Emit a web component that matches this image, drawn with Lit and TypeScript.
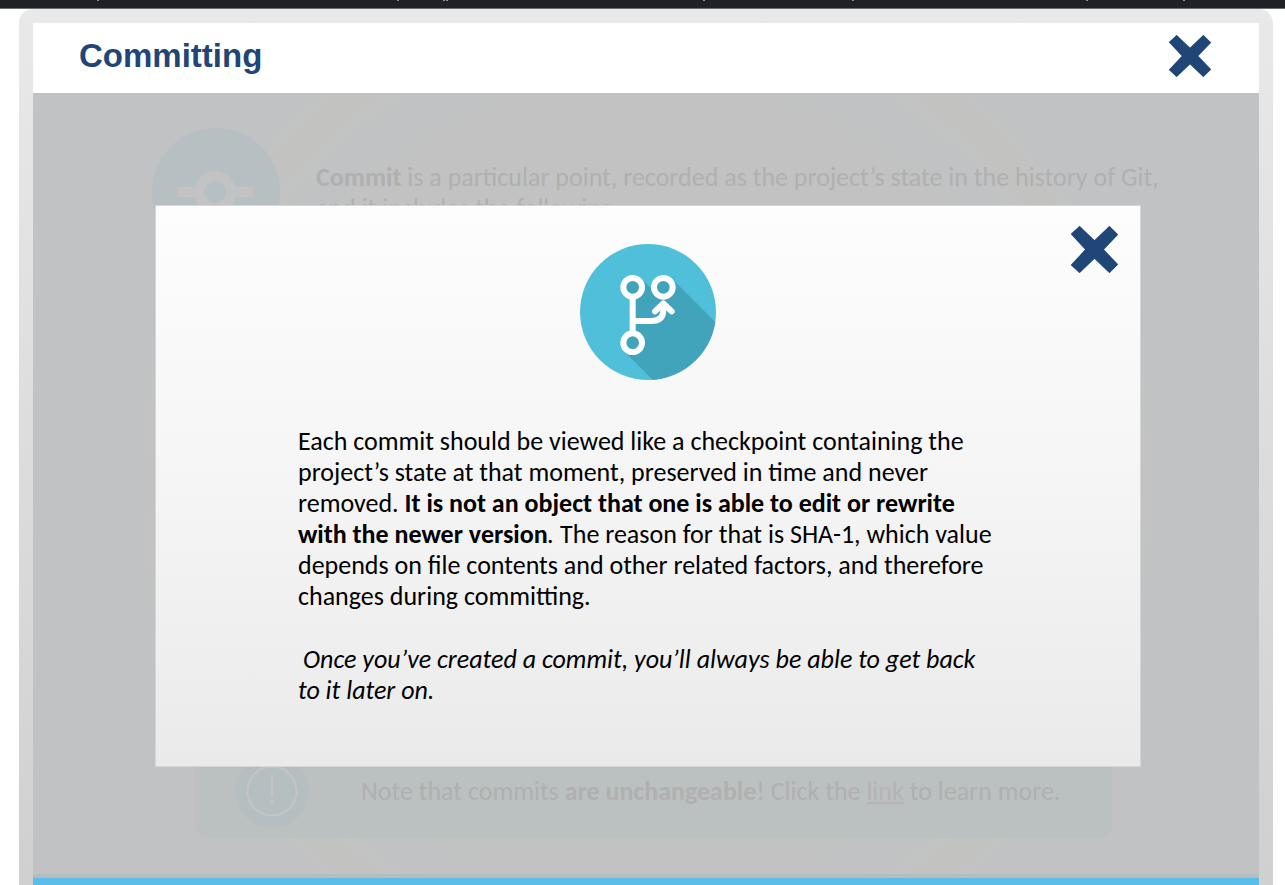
import { LitElement, html, css, svg } from "lit";
import { customElement, state } from "lit/decorators.js";

const cross = html`<svg class="cross" viewBox="0 0 41 41" aria-hidden="true">
  <path
    d="M0.5 7 7.5 0.5 20.5 13 33.5 0.5 40.5 7.5 28 20.5 40.5 33.5 33.5 40.5 20.5 28 7.5 40.5 0.5 34 13 20.5Z"
    fill="#1f4677" stroke="#1f4677" stroke-width="1" stroke-linejoin="round"
  />
</svg>`;

const tabMarks = [97, 397, 443, 446, 703, 852, 1086, 1183];

@customElement("app-root")
export class AppRoot extends LitElement {
  @state() private noteOpen = true;

  static styles = css`
    :host {
      display: flex;
      flex-direction: column;
      height: 100vh;
      overflow: hidden;
      background: #fff;
      font-family: Carlito, Lato, sans-serif;
      font-size: 26px;
      line-height: 31px;
      color: #000;
    }
    * { box-sizing: border-box; }
    p, h1 { margin: 0; }
    .topbar {
      flex: none;
      height: 9px;
      background: #202124;
      border-bottom: 1px solid #6a6d71;
    }
    .topbar svg { display: block; width: 100%; height: 1px; }
    .frame {
      flex: 1;
      min-height: 0;
      display: flex;
      flex-direction: column;
      margin: 0 12px 0 19px;
      padding: 14px 14px 0;
      border-radius: 14px 14px 0 0;
      background: linear-gradient(#e9e9e9, #e4e4e4 20%, #d0d0d0);
    }
    .header {
      flex: none;
      height: 70px;
      display: flex;
      align-items: center;
      justify-content: space-between;
      padding: 0 48px 4px 46px;
      background: #fff;
    }
    .title {
      font: bold 33px/40px "Liberation Sans", Arial, sans-serif;
      color: #1f4677;
    }
    .close {
      display: block;
      width: 42px;
      height: 42px;
      padding: 0;
      border: 0;
      background: none;
      cursor: pointer;
    }
    .cross { display: block; width: 100%; height: 100%; }
    .stage {
      flex: 1;
      min-height: 0;
      display: grid;
      border-bottom: 4px solid #b6bdbf;
      background: radial-gradient(circle at 50% 50%,
        #c3c2c2 0, #c2c2c2 400px, #c1c2c4 440px,
        #c2c3c1 475px, #c2c3c1 495px, #c1c2c4 515px);
    }
    .slide, .modal { grid-area: 1 / 1; }
    .slide {
      display: flex;
      flex-direction: column;
      justify-content: space-between;
      padding: 35px 100px 36px 119px;
      color: #b0b0b0;
    }
    .intro { display: flex; gap: 36px; }
    .intro svg { flex: none; width: 128px; height: 128px; }
    .intro p { padding-top: 34px; white-space: nowrap; }
    .note {
      display: flex;
      align-items: center;
      gap: 51px;
      height: 94px;
      margin: 0 47px 0 43px;
      padding-left: 40px;
      border-radius: 14px;
      background: #bbc0c1;
      white-space: nowrap;
    }
    .note svg { flex: none; width: 75px; height: 75px; }
    .note a { color: #b6b3b6; }
    .modal {
      position: relative;
      z-index: 1;
      display: flex;
      flex-direction: column;
      align-items: center;
      margin: 112px 118px 107px 122px;
      padding-top: 38px;
      border: 1px solid #d4d6d7;
      background: linear-gradient(#fdfdfd, #f5f5f5 50%, #eaeaea);
    }
    .modal .close {
      position: absolute;
      top: 20px;
      right: 22px;
      width: 47px;
      height: 47px;
    }
    .badge { flex: none; display: block; width: 136px; height: 136px; }
    .copy {
      align-self: stretch;
      display: flex;
      flex-direction: column;
      gap: 32px;
      padding: 46px 100px 0 142px;
      white-space: nowrap;
    }
    .lead { padding-left: 5px; }
    .footer { flex: none; height: 7px; background: #5bbee9; }
  `;

  private closeNote() {
    this.noteOpen = false;
  }

  private branchBadge() {
    return html`<svg class="badge" viewBox="59 42 408 408" aria-hidden="true">
      <clipPath id="disc"><circle cx="263" cy="246" r="204" /></clipPath>
      <circle cx="263" cy="246" r="204" fill="#50bfd9" />
      <path
        clip-path="url(#disc)" fill="#41a4bb"
        d="M191 364 217 338V172L243 146 278 181 309 172 335 146 480 291V460H287Z"
      />
      <g fill="none" stroke="#fff" stroke-width="18">
        <path d="M217 198V312M217 273H272Q309 273 309 240V226" />
        <path d="M284 244 309 220 334 244" stroke-linecap="round" stroke-linejoin="round" />
      </g>
      <g stroke="#fff" stroke-width="18" fill="#41a4bb">
        <circle cx="217" cy="172" r="28" />
        <circle cx="309" cy="172" r="28" />
        <circle cx="217" cy="338" r="28" />
      </g>
    </svg>`;
  }

  private modal() {
    return html`<section class="modal" role="dialog" aria-label="Commits are unchangeable">
      <button class="close" type="button" aria-label="Close note" @click=${this.closeNote}>${cross}</button>
      ${this.branchBadge()}
      <div class="copy">
        <p>
          Each commit should be viewed like a checkpoint containing the<br />
          project’s state at that moment, preserved in time and never<br />
          removed. <b>It is not an object that one is able to edit or rewrite<br />
          with the newer version</b><i>.</i> The reason for that is SHA-1, which value<br />
          depends on file contents and other related factors, and therefore<br />
          changes during committing.
        </p>
        <p>
          <i><span class="lead">Once</span> you’ve created a commit, you’ll always be able to get back<br />
          to it later on.</i>
        </p>
      </div>
    </section>`;
  }

  render() {
    return html`
      <div class="topbar">
        <svg viewBox="0 0 1285 1" preserveAspectRatio="none" aria-hidden="true">
          ${tabMarks.map((x) => svg`<rect x=${x} y="0" width="2" height="1" fill="#8d8f88" />`)}
        </svg>
      </div>
      <main class="frame">
        <header class="header">
          <h1 class="title">Committing</h1>
          <button class="close" type="button" aria-label="Close">${cross}</button>
        </header>
        <div class="stage">
          <div class="slide">
            <div class="intro">
              <svg viewBox="0 0 128 128" aria-hidden="true">
                <circle cx="64" cy="64" r="64" fill="#b6bfc2" />
                <path d="M26 64H48M80 64H101" stroke="#c3c3c3" stroke-width="10" />
                <circle cx="63" cy="64" r="16" fill="none" stroke="#c3c3c3" stroke-width="10" />
              </svg>
              <p>
                <b>Commit</b> is a particular point, recorded as the project’s state in the history of Git,<br />
                and it includes the following:
              </p>
            </div>
            <div class="note">
              <svg viewBox="0 0 75 75" aria-hidden="true">
                <circle cx="37" cy="37" r="37" fill="#b5bfc2" />
                <circle cx="37" cy="37" r="24.5" fill="none" stroke="#c5c5c5" stroke-width="2" />
                <path d="M37 22V41" stroke="#c5c5c5" stroke-width="2" stroke-linecap="round" />
                <circle cx="37" cy="48" r="2.5" fill="#c5c5c5" />
              </svg>
              <p>Note that commits <b>are unchangeable</b>! Click the <a href="#learn">link</a> to learn more.</p>
            </div>
          </div>
          ${this.noteOpen ? this.modal() : null}
        </div>
        <div class="footer"></div>
      </main>
    `;
  }
}
